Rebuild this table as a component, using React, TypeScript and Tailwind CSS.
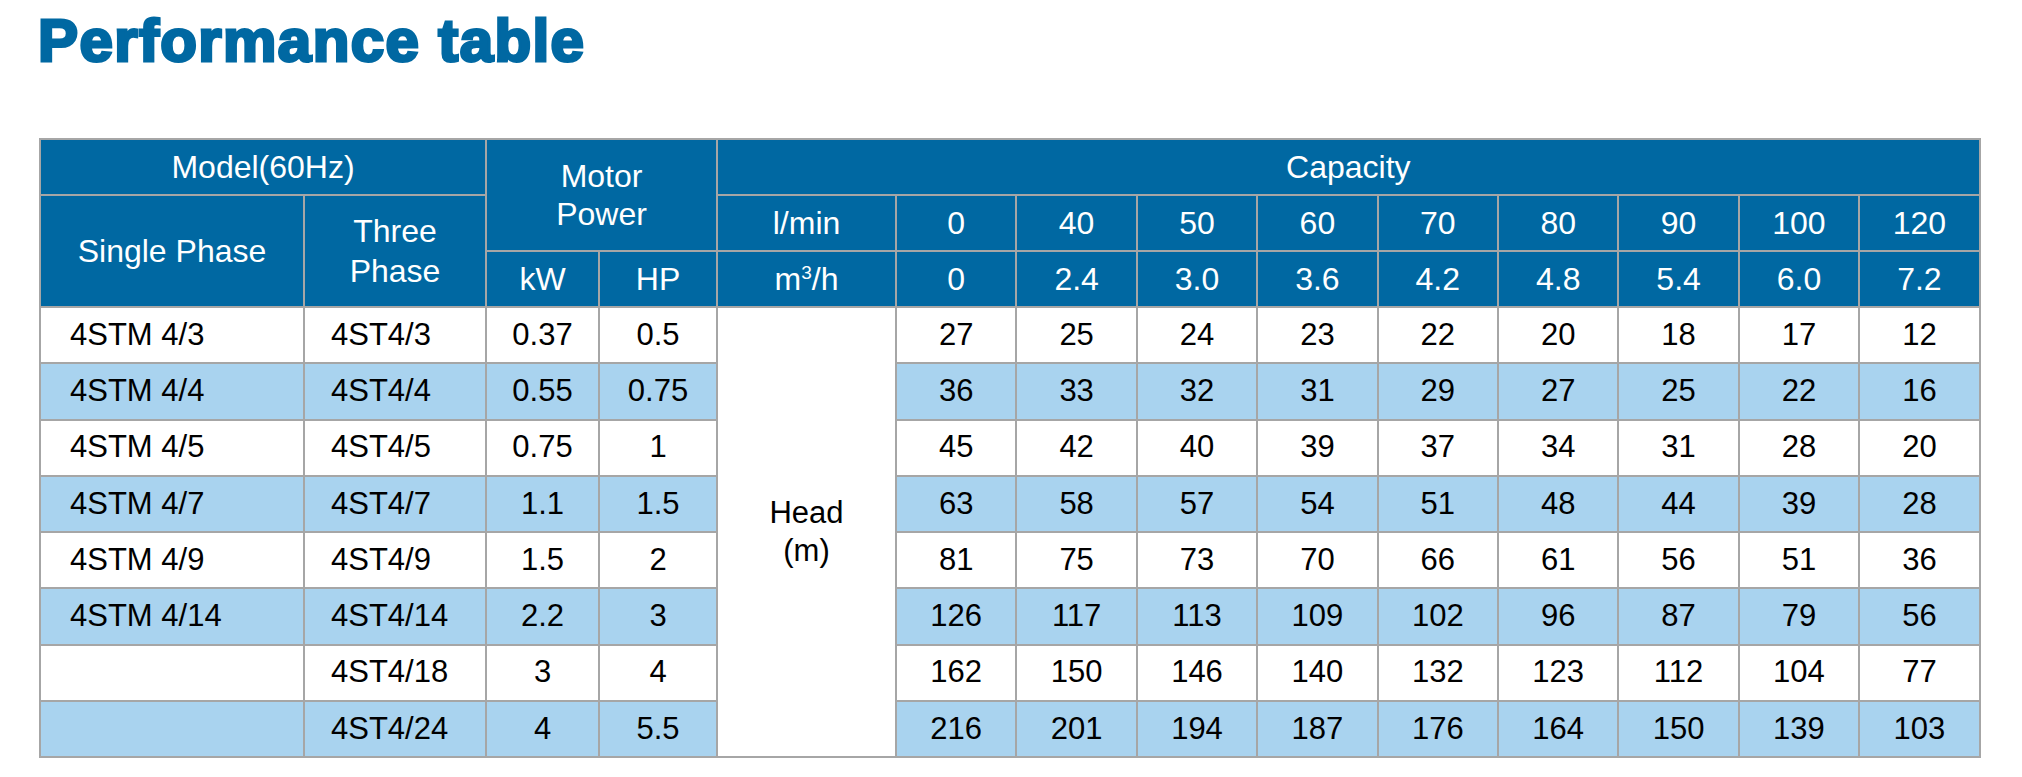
const capacityLmin = ["0", "40", "50", "60", "70", "80", "90", "100", "120"];
const capacityM3h = ["0", "2.4", "3.0", "3.6", "4.2", "4.8", "5.4", "6.0", "7.2"];

const rows = [
  { single: "4STM 4/3", three: "4ST4/3", kw: "0.37", hp: "0.5", head: [27, 25, 24, 23, 22, 20, 18, 17, 12] },
  { single: "4STM 4/4", three: "4ST4/4", kw: "0.55", hp: "0.75", head: [36, 33, 32, 31, 29, 27, 25, 22, 16] },
  { single: "4STM 4/5", three: "4ST4/5", kw: "0.75", hp: "1", head: [45, 42, 40, 39, 37, 34, 31, 28, 20] },
  { single: "4STM 4/7", three: "4ST4/7", kw: "1.1", hp: "1.5", head: [63, 58, 57, 54, 51, 48, 44, 39, 28] },
  { single: "4STM 4/9", three: "4ST4/9", kw: "1.5", hp: "2", head: [81, 75, 73, 70, 66, 61, 56, 51, 36] },
  { single: "4STM 4/14", three: "4ST4/14", kw: "2.2", hp: "3", head: [126, 117, 113, 109, 102, 96, 87, 79, 56] },
  { single: "", three: "4ST4/18", kw: "3", hp: "4", head: [162, 150, 146, 140, 132, 123, 112, 104, 77] },
  { single: "", three: "4ST4/24", kw: "4", hp: "5.5", head: [216, 201, 194, 187, 176, 164, 150, 139, 103] },
];

const th = "border-2 border-[#a6a6a6] bg-[#0068a2] text-white text-[32px] font-normal text-center leading-[38px] p-0";
const td = "border-2 border-[#a6a6a6] text-black text-[31px] text-center p-0";

export default function App() {
  return (
    <div className="w-[2022px] h-[777px] bg-white font-['Liberation_Sans',Arial,sans-serif] overflow-hidden">
      {/* TITLE */}
      <h1 className="pl-[38px] pt-[11px] text-[60px] leading-[60px] font-black text-[#0068a2] tracking-[1.4px] [-webkit-text-stroke:3px_#0068a2]">
        Performance table
      </h1>

      {/* TABLE */}
      <div className="pl-[39px] mt-[67px]">
        <table className="table-fixed border-collapse w-[1940px]">
          <colgroup>
            <col className="w-[264px]" />
            <col className="w-[182px]" />
            <col className="w-[113px]" />
            <col className="w-[118px]" />
            <col className="w-[179px]" />
            {capacityLmin.map((c) => (
              <col key={c} className="w-[120.4px]" />
            ))}
          </colgroup>
          <thead>
            <tr className="h-[56px]">
              <th colSpan={2} className={th}>
                Model(60Hz)
              </th>
              <th colSpan={2} rowSpan={2} className={th}>
                Motor
                <br />
                Power
              </th>
              <th colSpan={10} className={th}>
                Capacity
              </th>
            </tr>
            <tr className="h-[56px]">
              <th rowSpan={2} className={th}>
                Single Phase
              </th>
              <th rowSpan={2} className={`${th} leading-[40px]`}>
                Three
                <br />
                Phase
              </th>
              <th className={th}>l/min</th>
              {capacityLmin.map((c) => (
                <th key={c} className={th}>
                  {c}
                </th>
              ))}
            </tr>
            <tr className="h-[56px]">
              <th className={th}>kW</th>
              <th className={th}>HP</th>
              <th className={th}>
                m<sup className="text-[19px] -top-[11px]">3</sup>/h
              </th>
              {capacityM3h.map((c, i) => (
                <th key={i} className={th}>
                  {c}
                </th>
              ))}
            </tr>
          </thead>
          <tbody>
            {rows.map((r, i) => {
              const bg = i % 2 === 1 ? "bg-[#a9d3ef]" : "bg-white";
              return (
                <tr key={i} className={`h-[56.25px] ${bg}`}>
                  <td className={`${td} text-left pl-[29px]`}>{r.single}</td>
                  <td className={`${td} text-left pl-[26px]`}>{r.three}</td>
                  <td className={td}>{r.kw}</td>
                  <td className={td}>{r.hp}</td>
                  {i === 0 && (
                    <td rowSpan={8} className={`${td} bg-white leading-[38px]`}>
                      Head
                      <br />
                      (m)
                    </td>
                  )}
                  {r.head.map((h, j) => (
                    <td key={j} className={td}>
                      {h}
                    </td>
                  ))}
                </tr>
              );
            })}
          </tbody>
        </table>
      </div>
    </div>
  );
}
